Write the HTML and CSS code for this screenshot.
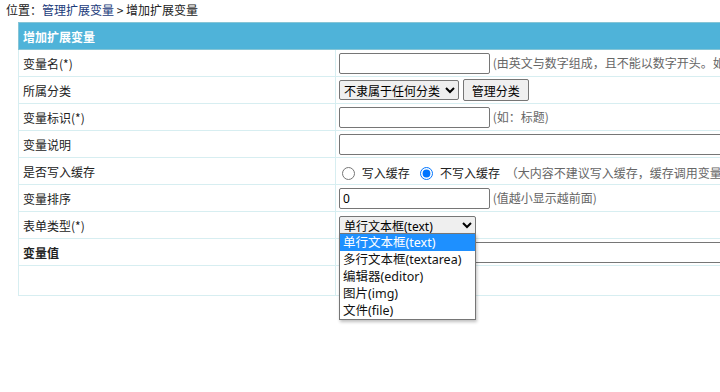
FILE: index.html
```
<!DOCTYPE html>
<html lang="zh-CN">
<head>
    <meta charset="UTF-8">
    <title>增加扩展变量</title>
    <link rel="stylesheet" href="styles.css">
</head>
<body>
<div class="page">
    <div class="crumb">位置：<a href="#">管理扩展变量</a> &gt; 增加扩展变量</div>

    <table class="form-table">
        <tr>
            <th colspan="2">增加扩展变量</th>
        </tr>
        <tr>
            <td class="label">变量名(*)</td>
            <td><input type="text" class="txt"> <span class="tip">(由英文与数字组成，且不能以数字开头。如：cfg_title)</span></td>
        </tr>
        <tr>
            <td class="label">所属分类</td>
            <td>
                <select class="sel-cat"><option>不隶属于任何分类</option></select>
                <button type="button" class="btn">管理分类</button>
            </td>
        </tr>
        <tr>
            <td class="label">变量标识(*)</td>
            <td><input type="text" class="txt"> <span class="tip">(如：标题)</span></td>
        </tr>
        <tr>
            <td class="label">变量说明</td>
            <td><input type="text" class="txt wide"></td>
        </tr>
        <tr>
            <td class="label">是否写入缓存</td>
            <td class="radios">
                <label><input type="radio" name="cache"> 写入缓存</label>
                <label><input type="radio" name="cache" checked> 不写入缓存</label>
                <span class="tip">（大内容不建议写入缓存，缓存调用变量：{$cfg_xxx}）</span>
            </td>
        </tr>
        <tr>
            <td class="label">变量排序</td>
            <td><input type="text" class="txt" value="0"> <span class="tip">(值越小显示越前面)</span></td>
        </tr>
        <tr>
            <td class="label">表单类型(*)</td>
            <td class="drop-cell">
                <select class="sel-type"><option>单行文本框(text)</option></select>
                <ul class="drop-list">
                    <li class="on">单行文本框(text)</li>
                    <li>多行文本框(textarea)</li>
                    <li>编辑器(editor)</li>
                    <li>图片(img)</li>
                    <li>文件(file)</li>
                </ul>
            </td>
        </tr>
        <tr>
            <td class="label"><strong>变量值</strong></td>
            <td><input type="text" class="txt wide"></td>
        </tr>
        <tr class="foot">
            <td></td>
            <td></td>
        </tr>
    </table>
</div>
</body>
</html>
```

FILE: styles.css
```
body {
    margin: 0;
    font-family: "Noto Sans CJK SC", "Noto Sans", sans-serif;
    font-size: 12px;
    color: #222;
    background: #fff;
}
.page {
    width: 720px;
    height: 392px;
    overflow: hidden;
}
.crumb {
    padding: 1px 6px 0;
    height: 21px;
    line-height: 18px;
}
.crumb a {
    color: #1b3b7b;
    text-decoration: none;
}

.form-table {
    margin-left: 18px;
    width: 1000px;
    border-collapse: collapse;
    border: 1px solid #7fbccd;
    border-bottom-color: #6fa9c2;
}
.form-table th {
    height: 26px;
    padding: 0 4px;
    background: #4fb3d9;
    border: 1px solid #86c5d6;
    color: #fff;
    font-weight: bold;
    text-align: left;
}
.form-table td {
    height: 26px;
    padding: 0 3px;
    border: 1px solid #d7eef1;
    white-space: nowrap;
}
.form-table td.label {
    width: 309px;
    padding-left: 4px;
}
.form-table .foot td {
    height: 29px;
}

.txt {
    box-sizing: border-box;
    width: 151px;
    height: 21px;
    margin: 0;
    padding: 1px 3px;
    border: 1px solid #767676;
    border-radius: 2px;
    font: 12px "Noto Sans", "Noto Sans CJK SC", sans-serif;
    vertical-align: middle;
}
.txt.wide {
    width: 640px;
}
.tip {
    color: #666;
    vertical-align: middle;
}

.sel-cat {
    box-sizing: border-box;
    width: 120px;
    height: 20px;
    font: 12px "Noto Sans CJK SC", sans-serif;
    vertical-align: middle;
    border-radius: 2px;
    border: 1px solid #767676;
}
.btn {
    height: 22px;
    margin-left: 1px;
    padding: 0 8px;
    font: 12px "Noto Sans CJK SC", sans-serif;
    background: #efefef;
    border: 1px solid #767676;
    border-radius: 2px;
    vertical-align: middle;
}

.radios label {
    margin-right: 5px;
    vertical-align: middle;
}
.radios input {
    margin: 0 4px 0 3px;
    vertical-align: -2px;
}
.radios .tip {
    margin-left: -2px;
}

.drop-cell {
    position: relative;
}
.sel-type {
    box-sizing: border-box;
    width: 137px;
    height: 19px;
    font: 12px "Noto Sans", "Noto Sans CJK SC", sans-serif;
    border: 1px solid #767676;
    border-radius: 2px;
    vertical-align: middle;
}
.drop-list {
    position: absolute;
    left: 3px;
    top: 21px;
    width: 135px;
    margin: 0;
    padding: 0;
    list-style: none;
    background: #fff;
    border: 1px solid #767676;
    box-shadow: 1px 2px 3px rgba(0, 0, 0, 0.25);
    font: 12.5px "Noto Sans", "Noto Sans CJK SC", sans-serif;
    z-index: 2;
}
.drop-list li {
    height: 17px;
    line-height: 17px;
    padding: 0 3px;
    color: #111;
}
.drop-list li.on {
    background: #1e90ff;
    color: #fff;
}
```
